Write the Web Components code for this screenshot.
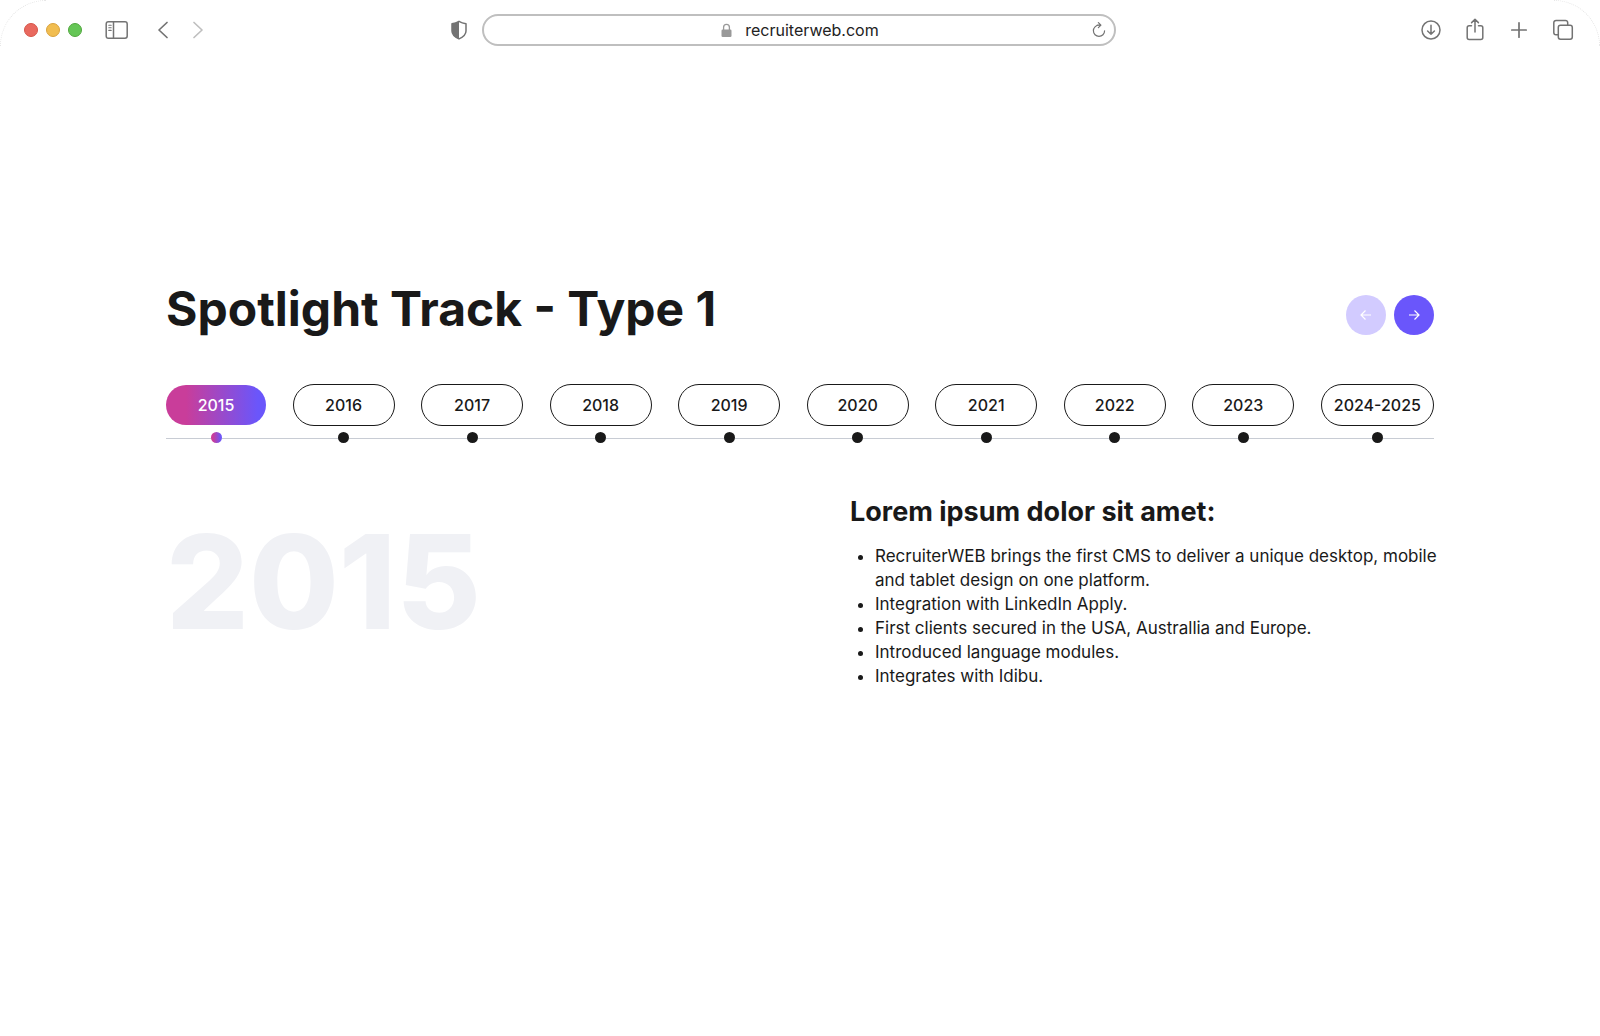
<!DOCTYPE html>
<html lang="en">
<head>
<meta charset="utf-8">
<meta name="viewport" content="width=device-width, initial-scale=1">
<title>Spotlight Track</title>
<style>
  body {
    margin: 0;
    background: #fff;
    color: #191919;
    font-family: Inter, "Liberation Sans", sans-serif;
  }
</style>
</head>
<body>
<browser-bar url="recruiterweb.com"></browser-bar>
<spotlight-track>
  <span slot="title">Spotlight Track - Type 1</span>
  <track-year active>2015</track-year>
  <track-year>2016</track-year>
  <track-year>2017</track-year>
  <track-year>2018</track-year>
  <track-year>2019</track-year>
  <track-year>2020</track-year>
  <track-year>2021</track-year>
  <track-year>2022</track-year>
  <track-year>2023</track-year>
  <track-year>2024-2025</track-year>
  <year-panel slot="panel" year="2015">
    <span slot="heading">Lorem ipsum dolor sit amet:</span>
    <ul>
      <li>RecruiterWEB brings the first CMS to deliver a unique desktop, mobile and tablet design on one platform.</li>
      <li>Integration with LinkedIn Apply.</li>
      <li>First clients secured in the USA, Australlia and Europe.</li>
      <li>Introduced language modules.</li>
      <li>Integrates with Idibu.</li>
    </ul>
  </year-panel>
</spotlight-track>

<script>
class BrowserBar extends HTMLElement {
  constructor() {
    super();
    const template = `
  <style>
    :host {
      display: block;
      position: relative;
    }
    /* faint rounded window corners */
    :host::before,
    :host::after {
      content: "";
      position: absolute;
      top: 0;
      width: 45px;
      height: 45px;
      border-top: 1px dotted #e6e6e6;
      pointer-events: none;
    }
    :host::before {
      left: 0;
      border-left: 1px dotted #e6e6e6;
      border-top-left-radius: 46px;
    }
    :host::after {
      right: 0;
      border-right: 1px dotted #e6e6e6;
      border-top-right-radius: 46px;
    }
    .bar {
      display: grid;
      grid-template-columns: 1fr minmax(200px, 634px) 1fr;
      align-items: center;
      height: 60px;
      padding: 0 26px 0 24px;
    }
    .left, .right, .lights, .nav {
      display: flex;
      align-items: center;
    }
    .lights { gap: 8px; margin-right: 23px; }
    .light {
      width: 14px;
      height: 14px;
      box-sizing: border-box;
      border-radius: 50%;
      border: 1px solid #d65549;
      background: #e9695f;
    }
    .light.min { background: #f1bd50; border-color: #d9a23d; }
    .light.max { background: #65c656; border-color: #51a73e; }
    .nav { gap: 23px; margin-left: 28px; }
    .shield { margin-left: auto; margin-right: 14px; }
    .right { justify-content: flex-end; gap: 22px; }
    button {
      display: flex;
      padding: 0;
      border: 0;
      background: none;
      color: #737373;
    }
    button:disabled { color: #bfbfbf; }
    svg {
      display: block;
      fill: none;
      stroke: currentColor;
      stroke-linecap: round;
      stroke-linejoin: round;
    }
    .address {
      display: flex;
      align-items: center;
      height: 32px;
      box-sizing: border-box;
      padding: 0 8px;
      border: 2px solid #bfbfbf;
      border-radius: 16px;
    }
    .address label {
      display: flex;
      align-items: center;
      gap: 13px;
      margin: 0 auto;
      padding-left: 16px;
      color: #999;
    }
    input {
      field-sizing: content;
      padding: 0;
      border: 0;
      outline: 0;
      background: none;
      color: #222;
      font: 400 16px/24px Inter, "Liberation Sans", sans-serif;
    }
  </style>
  <div class="bar">
    <div class="left">
      <div class="lights">
        <button class="light" aria-label="Close"></button>
        <button class="light min" aria-label="Minimise"></button>
        <button class="light max" aria-label="Zoom"></button>
      </div>
      <button aria-label="Sidebar">
        <svg width="24" height="20" viewBox="0 0 24 20" stroke-width="1.5"><rect x="1.2" y="1.7" width="21" height="16.6" rx="2.2"/><path d="M8.5 2v16"/><path stroke-width="1.1" d="M3.8 5.2h2.4M3.8 7.8h2.4M3.8 10.4h2.4"/></svg>
      </button>
      <div class="nav">
        <button aria-label="Back">
          <svg width="12" height="20" viewBox="0 0 12 20" stroke-width="1.7"><path d="M10 2.5 2 10l8 7.5"/></svg>
        </button>
        <button aria-label="Forward" disabled>
          <svg width="12" height="20" viewBox="0 0 12 20" stroke-width="1.7"><path d="m2 2.5 8 7.5-8 7.5"/></svg>
        </button>
      </div>
      <button class="shield" aria-label="Privacy report">
        <svg width="18" height="20" viewBox="0 0 18 20" stroke-width="1.5"><path d="M9 1.3c2 1.2 4.3 2 7 2.4v7.3c0 3.7-3.3 6.2-7 7.9-3.7-1.7-7-4.2-7-7.9V3.7c2.7-.4 5-1.2 7-2.4z"/><path fill="currentColor" stroke="none" d="M9 1.3v17.6c-3.7-1.7-7-4.2-7-7.9V3.7c2.7-.4 5-1.2 7-2.4z"/></svg>
      </button>
    </div>
    <div class="address">
      <label>
        <svg width="11" height="15" viewBox="0 0 11 15" stroke-width="1.3"><path d="M2.6 7V4.2a2.9 2.9 0 0 1 5.8 0V7"/><rect x=".5" y="6.5" width="10" height="7.5" rx="1.2" fill="currentColor" stroke="none"/></svg>
        <input type="text" aria-label="Address" size="16">
      </label>
      <button aria-label="Reload">
        <svg width="14" height="16" viewBox="0 0 14 16" stroke-width="1.2"><path d="M7 3.2a5.6 5.6 0 1 0 5.6 5.6M5.2 3.2h3.6M6.4.7l2.5 2.5-2.5 2.5"/></svg>
      </button>
    </div>
    <div class="right">
      <button aria-label="Downloads">
        <svg width="22" height="22" viewBox="0 0 22 22" stroke-width="1.5"><circle cx="11" cy="11" r="9"/><path d="M11 6.3v8.9M7.6 12l3.4 3.3 3.4-3.3"/></svg>
      </button>
      <button aria-label="Share">
        <svg width="22" height="24" viewBox="0 0 22 24" stroke-width="1.5"><path d="M7.5 7.7H5.2a2 2 0 0 0-2 2v9.900a2 2 0 0 0 2 2h11.600a2 2 0 0 0 2-2V9.700a2 2 0 0 0-2-2h-2.300M11 14V1.600M7.600 4.600 11 1.200l3.400 3.400"/></svg>
      </button>
      <button aria-label="New tab">
        <svg width="22" height="22" viewBox="0 0 22 22" stroke-width="1.7"><path d="M11 3.8v14.4M3.8 11h14.4"/></svg>
      </button>
      <button aria-label="Show tabs">
        <svg width="22" height="22" viewBox="0 0 22 22" stroke-width="1.5"><rect x="6.300" y="6.300" width="14" height="14" rx="2.200"/><path d="M6 15.800H4a2.200 2.200 0 0 1-2.200-2.200V3.700a2.200 2.200 0 0 1 2.200-2.200h9.500a2.200 2.200 0 0 1 2.200 2.200V6"/></svg>
      </button>
    </div>
  </div>
`;

    const shadowRoot = this.attachShadow({mode: 'open'});
    shadowRoot.innerHTML = template;
  }

  connectedCallback() {
    this.shadowRoot.querySelector('input').value = this.getAttribute('url') || '';
  }
}

class TrackYear extends HTMLElement {
  constructor() {
    super();
    const template = `
  <style>
    :host {
      display: flex;
      flex-direction: column;
      align-items: center;
      gap: 6px;
    }
    button {
      box-sizing: border-box;
      min-width: 102px;
      height: 42px;
      padding: 0 12px;
      border: 1px solid #191919;
      border-radius: 21px;
      background: #fff;
      color: #191919;
      font: 500 16px/24px Inter, "Liberation Sans", sans-serif;
      white-space: nowrap;
    }
    .dot {
      width: 11px;
      height: 11px;
      border-radius: 50%;
      background: #191919;
    }
    :host([active]) button {
      min-width: 100px;
      height: 40px;
      margin: 1px 0;
      border: 0;
      color: #fff;
      background: linear-gradient(90deg, #c93d9a 20%, #6a56fb 92%);
    }
    :host([active]) .dot {
      background: linear-gradient(90deg, #c93d9a 20%, #6a56fb 92%);
    }
  </style>
  <button type="button"><slot></slot></button>
  <div class="dot"></div>
`;

    const shadowRoot = this.attachShadow({mode: 'open'});
    shadowRoot.innerHTML = template;
  }
}

class YearPanel extends HTMLElement {
  constructor() {
    super();
    const template = `
  <style>
    :host {
      display: grid;
      grid-template-columns: 1fr 1fr;
      gap: 100px;
      align-items: start;
    }
    .year {
      padding-top: 24px;
      color: #f0f1f5;
      font-size: 130px;
      line-height: 124px;
      font-weight: 800;
    }
    h2 {
      margin: 0 0 16px;
      font-size: 27px;
      line-height: 32px;
      font-weight: 700;
    }
    ::slotted(ul) {
      margin: 0 -8px 0 0;
      padding-left: 25px;
      font-size: 17px;
      line-height: 24px;
    }
  </style>
  <div class="year"></div>
  <div>
    <h2><slot name="heading"></slot></h2>
    <slot></slot>
  </div>
`;

    const shadowRoot = this.attachShadow({mode: 'open'});
    shadowRoot.innerHTML = template;
  }

  connectedCallback() {
    this.shadowRoot.querySelector('.year').textContent = this.getAttribute('year');
  }
}

class SpotlightTrack extends HTMLElement {
  constructor() {
    super();
    const template = `
  <style>
    :host {
      display: block;
      max-width: 1268px;
      margin: 0 auto;
      padding: 223px 24px 48px;
    }
    header {
      display: flex;
      justify-content: space-between;
      align-items: flex-end;
      margin-bottom: 49px;
    }
    h1 {
      margin: 0;
      font-size: 48px;
      line-height: 52px;
      font-weight: 700;
    }
    .arrows {
      display: flex;
      gap: 8px;
    }
    .arrows button {
      display: flex;
      align-items: center;
      justify-content: center;
      width: 40px;
      height: 40px;
      padding: 0;
      border: 0;
      border-radius: 50%;
      background: #6a56fb;
      color: #fff;
    }
    .arrows button:disabled { background: #d2cbff; }
    svg {
      fill: none;
      stroke: currentColor;
      stroke-width: 1.2;
    }
    .years {
      display: flex;
      justify-content: space-between;
      margin-bottom: 53px;
      background: linear-gradient(#c8ccd4, #c8ccd4) 0 calc(100% - 4px) / 100% 1px no-repeat;
    }
  </style>
  <header>
    <h1><slot name="title"></slot></h1>
    <div class="arrows">
      <button type="button" aria-label="Previous" disabled>
        <svg width="12" height="12" viewBox="0 0 12 12"><path d="M11 6H1.5M5.5 1.5 1 6l4.5 4.5"/></svg>
      </button>
      <button type="button" aria-label="Next">
        <svg width="12" height="12" viewBox="0 0 12 12"><path d="M1 6h9.5M6.5 1.5 11 6l-4.500 4.500"/></svg>
      </button>
    </div>
  </header>
  <div class="years"><slot></slot></div>
  <slot name="panel"></slot>
`;

    const shadowRoot = this.attachShadow({mode: 'open'});
    shadowRoot.innerHTML = template;
  }
}

window.customElements.define('browser-bar', BrowserBar);
window.customElements.define('track-year', TrackYear);
window.customElements.define('year-panel', YearPanel);
window.customElements.define('spotlight-track', SpotlightTrack);
</script>
</body>
</html>
